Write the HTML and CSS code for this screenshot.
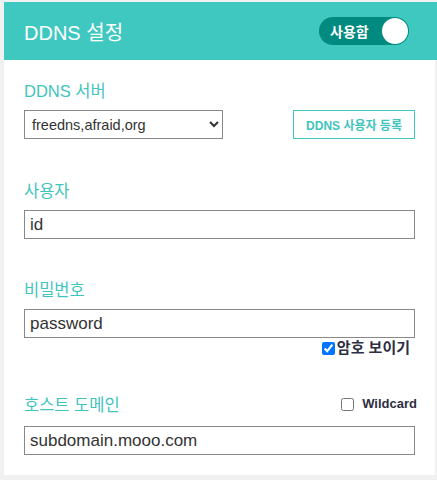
FILE: index.html
```html
<!DOCTYPE html>
<html lang="ko">
<head>
<meta charset="utf-8">
<link rel="stylesheet" href="styles.css">
</head>
<body>
<div class="card">
  <div class="header">
    <div class="title">DDNS 설정</div>
    <div class="toggle">
      <span class="toggle-label">사용함</span>
      <span class="knob"></span>
    </div>
  </div>
  <div class="content">
    <div class="field">
      <div class="label">DDNS 서버</div>
      <div class="row">
        <select class="select">
          <option>freedns,afraid,org</option>
        </select>
        <button class="btn">DDNS 사용자 등록</button>
      </div>
    </div>
    <div class="field user">
      <div class="label">사용자</div>
      <input class="input" type="text" value="id">
    </div>
    <div class="field pw">
      <div class="label">비밀번호</div>
      <input class="input" type="text" value="password">
      <label class="show"><input type="checkbox" checked class="chk">암호 보이기</label>
    </div>
    <div class="field host">
      <div class="label-row">
        <div class="label">호스트 도메인</div>
        <label class="wild"><input type="checkbox" class="chk2">Wildcard</label>
      </div>
      <input class="input" type="text" value="subdomain.mooo.com">
    </div>
  </div>
</div>
</body>
</html>
```

FILE: styles.css
```css
html { background: #f1f1f1; }
body {
  margin: 0;
  font-family: "Liberation Sans", "Noto Sans CJK KR", sans-serif;
}
.card {
  margin: 2px 0 0 4px;
  width: 431px;
  height: 473px;
  background: #fff;
  box-sizing: border-box;
}
.header {
  height: 58px;
  margin-right: -2px;
  background: #3ec8c0;
  display: flex;
  align-items: center;
  justify-content: space-between;
  padding: 0 28px 0 20px;
}
.title {
  color: #fff;
  font-size: 20px;
}
.toggle {
  width: 90px;
  height: 28px;
  border-radius: 14px;
  background: #008a80;
  display: flex;
  align-items: center;
  justify-content: space-between;
  padding: 0 1px 0 11px;
  box-sizing: border-box;
}
.toggle-label {
  color: #fff;
  font-weight: bold;
  font-size: 14px;
}
.knob {
  width: 26px;
  height: 26px;
  border-radius: 50%;
  background: #fff;
}
.content {
  padding: 20px 20px 0 20px;
}
.field { margin-bottom: 41px; }
.field.user { margin-bottom: 40px; }
.field.pw { margin-bottom: 37px; }
.label {
  color: #3fc5bd;
  font-size: 16.5px;
  line-height: 22px;
  height: 22px;
  margin-bottom: 8px;
}
.row {
  display: flex;
  justify-content: space-between;
  align-items: center;
}
.select {
  width: 199px;
  height: 29px;
  border: 1px solid #888;
  border-radius: 0;
  font-family: "Liberation Sans", sans-serif;
  font-size: 14.5px;
  color: #333;
  padding: 0 3px;
  background: #fff;
}
.btn {
  width: 122px;
  height: 29px;
  border: 1px solid #3ec8c0;
  background: #fff;
  color: #3fc5bd;
  font-family: "Liberation Sans", "Noto Sans CJK KR", sans-serif;
  font-weight: bold;
  font-size: 12px;
  padding: 0;
}
.input {
  display: block;
  width: 391px;
  height: 29px;
  box-sizing: border-box;
  border: 1px solid #888;
  padding: 0 5px;
  font-family: "Liberation Sans", sans-serif;
  font-size: 17px;
  color: #333;
  margin: 0;
}
.show {
  display: flex;
  justify-content: flex-end;
  align-items: center;
  padding-right: 5px;
  margin-top: 1px;
  font-weight: bold;
  font-size: 15px;
  line-height: 18px;
  color: #2e2e44;
}
.chk {
  margin: 0 2px 0 0;
  width: 13px;
  height: 13px;
}
.host .label { margin-bottom: 10px; }
.label-row {
  display: flex;
  justify-content: space-between;
  align-items: flex-start;
  margin-right: -2px;
}
.wild {
  display: flex;
  align-items: center;
  font-weight: bold;
  font-size: 13px;
  color: #2e2e44;
  line-height: 20px;
}
.chk2 {
  margin: 0 8px 0 0;
  width: 13px;
  height: 13px;
}
```
